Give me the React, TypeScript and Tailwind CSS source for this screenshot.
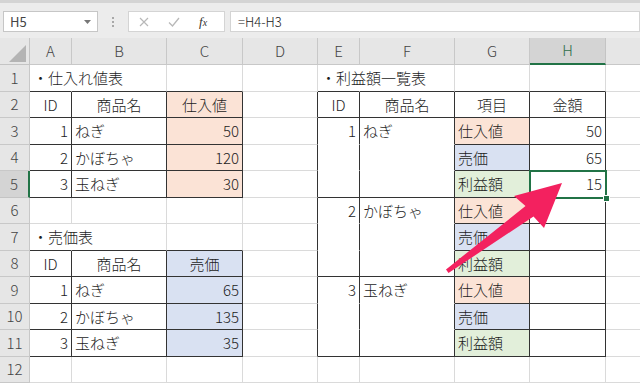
import React from "react";

type Cell = { t?: string; a?: "l" | "r" | "c"; f?: "o" | "b" | "g"; ov?: boolean };

const COLS = ["A", "B", "C", "D", "E", "F", "G", "H", ""];

const data: Record<string, Cell> = {
    "1,0": { t: "・仕入れ値表", a: "l", ov: true },
    "2,0": { t: "ID", a: "c" },
    "2,1": { t: "商品名", a: "c" },
    "2,2": { t: "仕入値", a: "c", f: "o" },
    "3,0": { t: "1", a: "r" },
    "3,1": { t: "ねぎ", a: "l" },
    "3,2": { t: "50", a: "r", f: "o" },
    "4,0": { t: "2", a: "r" },
    "4,1": { t: "かぼちゃ", a: "l" },
    "4,2": { t: "120", a: "r", f: "o" },
    "5,0": { t: "3", a: "r" },
    "5,1": { t: "玉ねぎ", a: "l" },
    "5,2": { t: "30", a: "r", f: "o" },
    "7,0": { t: "・売価表", a: "l", ov: true },
    "8,0": { t: "ID", a: "c" },
    "8,1": { t: "商品名", a: "c" },
    "8,2": { t: "売価", a: "c", f: "b" },
    "9,0": { t: "1", a: "r" },
    "9,1": { t: "ねぎ", a: "l" },
    "9,2": { t: "65", a: "r", f: "b" },
    "10,0": { t: "2", a: "r" },
    "10,1": { t: "かぼちゃ", a: "l" },
    "10,2": { t: "135", a: "r", f: "b" },
    "11,0": { t: "3", a: "r" },
    "11,1": { t: "玉ねぎ", a: "l" },
    "11,2": { t: "35", a: "r", f: "b" },
    "1,4": { t: "・利益額一覧表", a: "l", ov: true },
    "2,4": { t: "ID", a: "c" },
    "2,5": { t: "商品名", a: "c" },
    "2,6": { t: "項目", a: "c" },
    "2,7": { t: "金額", a: "c" },
    "3,4": { t: "1", a: "r" },
    "3,5": { t: "ねぎ", a: "l" },
    "6,4": { t: "2", a: "r" },
    "6,5": { t: "かぼちゃ", a: "l" },
    "9,4": { t: "3", a: "r" },
    "9,5": { t: "玉ねぎ", a: "l" },
    "3,7": { t: "50", a: "r" },
    "4,7": { t: "65", a: "r" },
    "5,7": { t: "15", a: "r" },
};

// item column of the profit table
const items: Cell[] = [
    { t: "仕入値", a: "l", f: "o" },
    { t: "売価", a: "l", f: "b" },
    { t: "利益額", a: "l", f: "g" },
];
for (let r = 3; r <= 11; r++) data[`${r},6`] = items[(r - 3) % 3];

// border group of a cell (merged cells share one)
function gid(r: number, c: number): string | null {
    if (r >= 2 && r <= 5 && c >= 0 && c <= 2) return `${r},${c}`;
    if (r >= 8 && r <= 11 && c >= 0 && c <= 2) return `${r},${c}`;
    if (r >= 2 && r <= 11 && c >= 4 && c <= 7) {
        if (c <= 5 && r >= 3) return `m${Math.floor((r - 3) / 3)},${c}`;
        return `${r},${c}`;
    }
    return null;
}

function cellClass(r: number, c: number, cell?: Cell) {
    let right = "border-r-[#dadada]";
    if (gid(r, c) !== null || gid(r, c + 1) !== null) right = "border-r-[#333333]";
    else if (cell?.ov) right = "border-r-transparent";

    let bottom = "border-b-[#dadada]";
    const a = gid(r, c);
    const b = gid(r + 1, c);
    if (a !== b && (a !== null || b !== null)) bottom = "border-b-[#333333]";
    else if (a !== null && a === b) bottom = "border-b-white";

    let fill = "";
    if (cell?.f === "o") fill = "bg-[#fbe3d6]";
    if (cell?.f === "b") fill = "bg-[#d9e1f2]";
    if (cell?.f === "g") fill = "bg-[#e2efda]";

    let align = "justify-start pl-[3px]";
    if (cell?.a === "r") align = "justify-end pr-[3px]";
    if (cell?.a === "c") align = "justify-center";

    return `flex items-center pt-[1px] border-r border-b whitespace-nowrap ${right} ${bottom} ${fill} ${align}`;
}

function FormulaBar() {
    return (
        <div className="h-[38px] bg-[#ececec] border-t-[3px] border-[#d4d4d4] relative">
            <div className="flex items-start pt-[8px]">
                <div className="ml-[3px] w-[95px] h-[21px] bg-white border border-[#c6c6c6] flex items-center justify-between px-[6px]">
                    <span className="text-[13px] text-[#444]">H5</span>
                    <svg width="7" height="4" viewBox="0 0 7 4"><path d="M0 0h7L3.5 4z" fill="#777" /></svg>
                </div>
                <div className="w-[30px] h-[21px] flex flex-col items-center justify-center gap-[2px]">
                    <span className="w-[2px] h-[2px] bg-[#a8a8a8]" />
                    <span className="w-[2px] h-[2px] bg-[#a8a8a8]" />
                    <span className="w-[2px] h-[2px] bg-[#a8a8a8]" />
                </div>
                <div className="w-[97px] h-[21px] bg-white border border-[#d4d4d4] flex items-center pl-[10px] gap-[19px]">
                    <svg width="10" height="10" viewBox="0 0 10 10" stroke="#b8b8b8" strokeWidth="1.2"><path d="M1 1l8 8M9 1l-8 8" /></svg>
                    <svg width="12" height="10" viewBox="0 0 12 10" fill="none" stroke="#b8b8b8" strokeWidth="1.3"><path d="M1 5.5l3.5 3.5L11 1" /></svg>
                    <span className="italic text-[13px] text-[#333] font-['Liberation_Serif',serif]">f<span className="text-[10px]">x</span></span>
                </div>
                <div className="ml-[5px] flex-1 h-[21px] bg-white border border-[#d4d4d4] flex items-center pl-[7px]">
                    <span className="text-[13px] text-[#222] font-light">=H4-H3</span>
                </div>
            </div>
        </div>
    );
}

export default function App() {
    const rows = Array.from({ length: 12 }, (_, i) => i + 1);

    return (
        <div className="relative w-[640px] h-[383px] overflow-hidden bg-white font-['Noto_Sans_CJK_JP','Noto_Sans',sans-serif]">
            <FormulaBar />

            <div className="grid grid-cols-[30px_42px_95px_76px_75px_42px_95px_75px_76px_76px] grid-rows-[27px_repeat(12,26.5px)] text-[15px] font-light text-[#1c1c1c]">
                {/* corner */}
                <div className="bg-[#e6e6e6] border-r border-b border-[#c4c4c4] flex items-end justify-end pr-[3px] pb-[2px]">
                    <svg width="17" height="17" viewBox="0 0 17 17"><path d="M17 0V17H0z" fill="#b4b4b4" /></svg>
                </div>
                {COLS.map((l, i) =>
                    l === "H" ? (
                        <div key={i} className="bg-[#d4d4d4] border-r border-[#c4c4c4] border-b-2 border-b-[#217346] flex items-center justify-center text-[#2f6f4b]">
                            {l}
                        </div>
                    ) : (
                        <div key={i} className="bg-[#e6e6e6] border-r border-b border-[#c8c8c8] flex items-center justify-center text-[#444]">
                            {l}
                        </div>
                    )
                )}

                {rows.map((r) => (
                    <React.Fragment key={r}>
                        {r === 5 ? (
                            <div className="bg-[#d4d4d4] border-r-2 border-r-[#217346] border-b border-b-[#c4c4c4] flex items-center justify-center text-[#444]">
                                {r}
                            </div>
                        ) : (
                            <div className="bg-[#e6e6e6] border-r border-b border-[#c8c8c8] flex items-center justify-center text-[#444]">
                                {r}
                            </div>
                        )}
                        {COLS.map((_, c) => {
                            const cell = data[`${r},${c}`];
                            return (
                                <div key={c} className={cellClass(r, c, cell)}>
                                    {cell?.t}
                                </div>
                            );
                        })}
                    </React.Fragment>
                ))}
            </div>

            {/* active cell H5 */}
            <div className="absolute left-[529px] top-[170px] w-[78px] h-[29px] border-2 border-[#217346] pointer-events-none">
                <div className="absolute right-[-5px] bottom-[-5px] w-[7px] h-[7px] bg-[#217346] border border-white" />
            </div>

            {/* annotation arrow */}
            <svg className="absolute left-0 top-0 pointer-events-none" width="640" height="383" viewBox="0 0 640 383">
                <polygon
                    points="446,269.5 525.5,206 514,196 562,183 544,228 533.5,216.5 448.5,273"
                    fill="#f3215f"
                />
            </svg>
        </div>
    );
}
